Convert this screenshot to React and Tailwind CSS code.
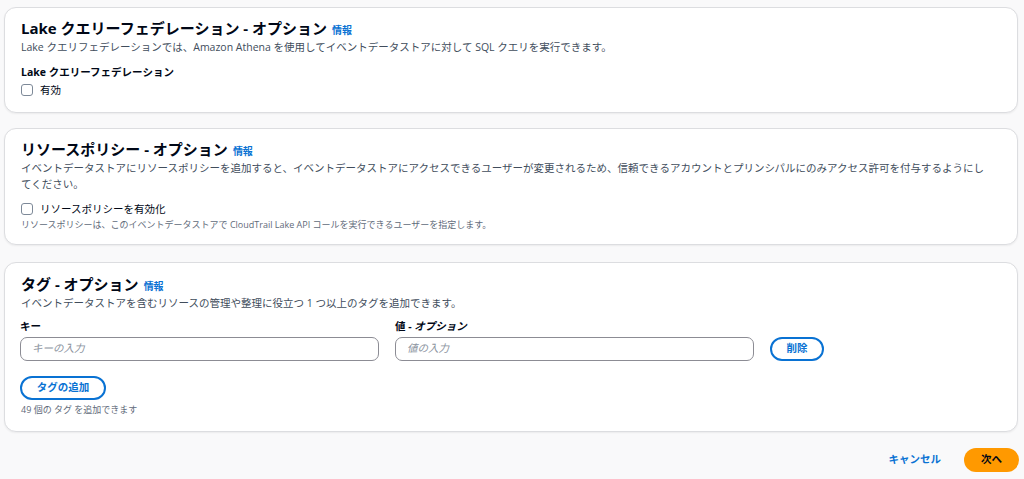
import React from "react"

function Info(){
    return <span className="ml-[5px] text-[10px] font-bold text-[#0972d3]">情報</span>
}

function Checkbox({label}){
    return(
        <label className="flex items-center gap-[7px] text-[10.5px] text-[#000716] leading-4">
            <span className="w-[12px] h-[12px] rounded-[3px] border border-[#7d8998] bg-white"></span>
            {label}
        </label>
    )
}

function Card({children,className}){
    return(
        <div className={"bg-white border border-[#dcdde0] rounded-[12px] shadow-[0_1px_2px_rgba(0,7,22,0.06)] px-4 "+className}>
            {children}
        </div>
    )
}

function Title({text}){
    return(
        <h2 className="text-[15px] leading-[18px] font-bold text-[#000716] flex items-baseline">
            <span>{text}</span><Info/>
        </h2>
    )
}

export default function App(){
    return(
        <div className="min-h-[479px] bg-[#f9f9fa] pl-1 pr-[6px] pt-[7px]" style={{fontFamily:'"Open Sans","Noto Sans CJK JP",sans-serif'}}>
            <Card className="pt-[11px] h-[106px]">
                <Title text="Lake クエリーフェデレーション - オプション"/>
                <p className="text-[10.5px] leading-4 text-[#414d5c]">Lake クエリフェデレーションでは、Amazon Athena を使用してイベントデータストアに対して SQL クエリを実行できます。</p>
                <p className="mt-[9px] text-[10.5px] leading-4 font-bold text-[#000716]">Lake クエリーフェデレーション</p>
                <div className="mt-[2px]"><Checkbox label="有効"/></div>
            </Card>

            <Card className="mt-[15px] pt-[11px] h-[117px]">
                <Title text="リソースポリシー - オプション"/>
                <p className="text-[10.5px] leading-4 text-[#414d5c] pr-2">イベントデータストアにリソースポリシーを追加すると、イベントデータストアにアクセスできるユーザーが変更されるため、信頼できるアカウントとプリンシパルにのみアクセス許可を付与するようにしてください。</p>
                <div className="mt-[9px]"><Checkbox label="リソースポリシーを有効化"/></div>
                <p className="mt-[1px] text-[9px] leading-[14px] text-[#5f6b7a]">リソースポリシーは、このイベントデータストアで CloudTrail Lake API コールを実行できるユーザーを指定します。</p>
            </Card>

            <Card className="mt-[17px] pt-[12px] h-[170px]">
                <Title text="タグ - オプション"/>
                <p className="text-[10.5px] leading-4 text-[#414d5c]">イベントデータストアを含むリソースの管理や整理に役立つ 1 つ以上のタグを追加できます。</p>
                <div className="mt-[7px] flex items-end gap-4 -ml-[1px]">
                    <div className="w-[359px]">
                        <p className="text-[10.5px] leading-4 font-bold text-[#000716] mb-[3px]">キー</p>
                        <div className="h-[24px] rounded-[7px] border border-[#8c8c94] px-[11px] flex items-center text-[10.5px] italic text-[#8b939e]">キーの入力</div>
                    </div>
                    <div className="w-[359px]">
                        <p className="text-[10.5px] leading-4 font-bold text-[#000716] mb-[3px]">値 - <i>オプション</i></p>
                        <div className="h-[24px] rounded-[7px] border border-[#8c8c94] px-[11px] flex items-center text-[10.5px] italic text-[#8b939e]">値の入力</div>
                    </div>
                    <button className="h-[24px] w-[54px] rounded-full border-2 border-[#0972d3] text-[10.5px] font-bold text-[#0972d3]">削除</button>
                </div>
                <button className="mt-[15px] -ml-[1px] h-[24px] w-[86px] rounded-full border-2 border-[#0972d3] text-[10.5px] font-bold text-[#0972d3]">タグの追加</button>
                <p className="mt-[3px] text-[9px] leading-[14px] text-[#5f6b7a]">49 個の タグ を追加できます</p>
            </Card>

            <div className="flex justify-end items-center gap-[23px] mt-[16px] -mr-[1px]">
                <button className="text-[10.5px] font-bold text-[#0972d3]">キャンセル</button>
                <button className="h-[24px] w-[55px] rounded-full bg-[#ff9900] text-[10.5px] font-bold text-[#000716]">次へ</button>
            </div>
        </div>
    )
}
